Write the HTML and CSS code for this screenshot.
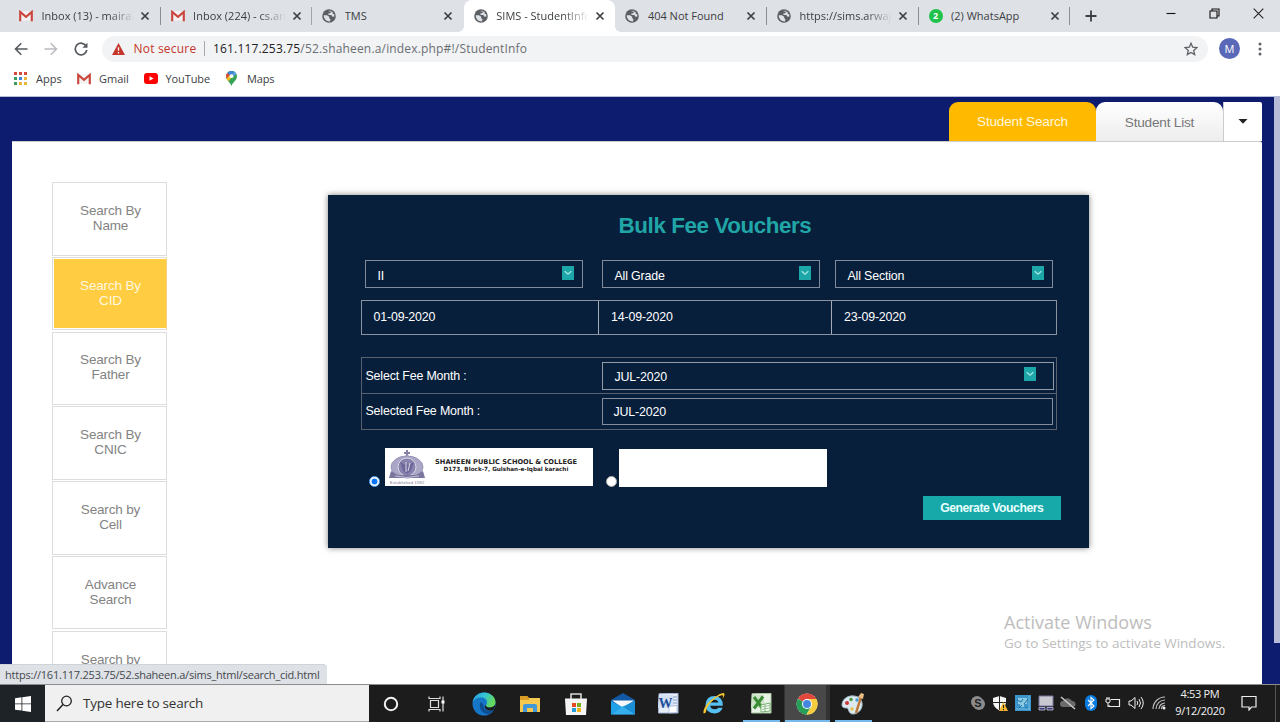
FILE: index.html
```
<!DOCTYPE html>
<html lang="en">
<head>
<meta charset="utf-8">
<title>SIMS - StudentInfo</title>
<link rel="stylesheet" href="styles.css">
</head>
<body>
<svg class="defs" aria-hidden="true">
  <symbol id="gmail" viewBox="0 0 15 12"><path d="M1 1h13v10H1z" fill="#f3f1f1"/><path d="M1.300 11.500V1.600l6.200 5.200 6.200-5.200v9.900" fill="none" stroke="#c9473d" stroke-width="2.300"/></symbol>
  <symbol id="globe" viewBox="0 0 14 14"><circle cx="7" cy="7" r="6.800" fill="#5b5f64"/><path d="M1.700 6.300 5 6.200l2.200 1.500v1.600l1.300.9-.6 2.200C4.500 12.500 1.700 10 1.700 6.300zM6 1.900 9 1.800 9.500 2.800 8 4.200 6.300 4.600 6.500 6 9.300 6 10.500 7.700 12.400 7.400 12.200 5.300 10.500 4.700 11 3.200" fill="#dee1e6"/></symbol>
  <symbol id="close" viewBox="0 0 10 10"><path d="m1.500 1.500 7 7m0-7-7 7" stroke="#3c4043" stroke-width="1.700"/></symbol>
  <symbol id="drop" viewBox="0 0 12 14"><path d="M0 0h12v14H0z" fill="#1ea7a8"/><path d="m2.700 5.200 3.300 3 3.300-3" fill="none" stroke="#a8e5e2" stroke-width="1.300"/></symbol>
</svg>

<header class="browser">
  <div class="tabstrip">
    <div class="tab"><svg class="fav mail"><use href="#gmail"/></svg><span class="tab-title fade">Inbox (13) - maira.</span><svg class="x"><use href="#close"/></svg></div>
    <div class="tab"><svg class="fav mail"><use href="#gmail"/></svg><span class="tab-title fade">Inbox (224) - cs.an</span><svg class="x"><use href="#close"/></svg></div>
    <div class="tab plain"><svg class="fav"><use href="#globe"/></svg><span class="tab-title">TMS</span><svg class="x"><use href="#close"/></svg></div>
    <div class="tab active"><svg class="fav"><use href="#globe"/></svg><span class="tab-title fade">SIMS - StudentInfo</span><svg class="x"><use href="#close"/></svg></div>
    <div class="tab"><svg class="fav"><use href="#globe"/></svg><span class="tab-title">404 Not Found</span><svg class="x"><use href="#close"/></svg></div>
    <div class="tab"><svg class="fav"><use href="#globe"/></svg><span class="tab-title fade">https://sims.arwaj.</span><svg class="x"><use href="#close"/></svg></div>
    <div class="tab"><span class="fav wa">2</span><span class="tab-title">(2) WhatsApp</span><svg class="x"><use href="#close"/></svg></div>
    <svg class="newtab" viewBox="0 0 12 12"><path d="M6 .5v11M.5 6h11" stroke="#3c4043" stroke-width="1.800"/></svg>
    <div class="winctl">
      <svg width="10" height="10" viewBox="0 0 10 10"><path d="M.5 4.500h9" stroke="#111" stroke-width="1.100"/></svg>
      <svg width="11" height="11" viewBox="0 0 11 11"><path d="M1 3h7v7H1zM3 3V1h7v7H8" fill="none" stroke="#111" stroke-width="1.100"/></svg>
      <svg width="11" height="11" viewBox="0 0 11 11"><path d="m.7.700 9.600 9.600m0-9.600L.7 10.300" stroke="#222" stroke-width="1.100"/></svg>
    </div>
  </div>
  <div class="toolbar">
    <svg class="nav" viewBox="0 0 14 14"><path d="M13.500 7H1.500M7.300 1.200 1.500 7l5.800 5.800" fill="none" stroke="#55595e" stroke-width="1.600"/></svg>
    <svg class="nav" viewBox="0 0 14 14"><path d="M.5 7h12M6.700 1.200 12.500 7l-5.800 5.800" fill="none" stroke="#b9bbbe" stroke-width="1.500"/></svg>
    <svg class="nav" viewBox="0 0 14 14"><path d="M12.200 4.300A5.800 5.800 0 1 0 12.800 8" fill="none" stroke="#55595e" stroke-width="1.700"/><path d="M13.500.8v5H8.400z" fill="#55595e"/></svg>
    <div class="omnibox">
      <svg class="warn" viewBox="0 0 14 13"><path d="M7 0l7 13H0z" fill="#c5362b"/><path d="M7 4.500v4M7 9.800v1.500" stroke="#fff" stroke-width="1.400"/></svg>
      <span class="insecure">Not secure</span>
      <span class="url"><b>161.117.253.75</b>/52.shaheen.a/index.php#!/StudentInfo</span>
      <svg class="star" viewBox="0 0 14 14"><path d="m7 1.200 1.700 4 4.300.4-3.300 2.800 1 4.200L7 10.400l-3.700 2.200 1-4.200L1 5.600l4.300-.4z" fill="none" stroke="#5f6368" stroke-width="1.300"/></svg>
    </div>
    <span class="avatar">M</span>
    <svg class="kebab" viewBox="0 0 4 14"><g fill="#5f6368"><circle cx="2" cy="2" r="1.500"/><circle cx="2" cy="7" r="1.500"/><circle cx="2" cy="12" r="1.500"/></g></svg>
  </div>
  <nav class="bookmarks">
    <span class="bm apps"><svg width="13" height="13" viewBox="0 0 13 13"><g fill="#d5493f"><path d="M0 0h3v3H0zM5 0h3v3H5zM10 0h3v3h-3z"/></g><path d="M0 5h3v3H0zM0 10h3v3H0z" fill="#3d9a58"/><path d="M5 5h3v3H5z" fill="#4285d8"/><path d="M10 5h3v3h-3zM5 10h3v3H5zM10 10h3v3h-3z" fill="#e8b53a"/></svg>Apps</span>
    <span class="bm gm"><svg width="14" height="12"><use href="#gmail"/></svg>Gmail</span>
    <span class="bm yt"><svg width="14" height="11" viewBox="0 0 14 11"><rect width="14" height="11" rx="3" fill="#f00"/><path d="m5.500 3.200 4 2.300-4 2.300z" fill="#fff"/></svg>YouTube</span>
    <span class="bm mp"><svg width="11" height="15" viewBox="0 0 11 15"><path d="M5.500 15C4.500 11.500 0 9.500 0 5.300A5.400 5.400 0 0 1 11 5.300C11 9.500 6.500 11.500 5.500 15z" fill="#35a455"/><path d="M5.500 0A5.400 5.400 0 0 0 1.300 1.900L4 4.200 8.300.8A5.400 5.400 0 0 0 5.500 0z" fill="#3f7fe8"/><path d="M1.300 1.900A5.400 5.400 0 0 0 .5 7.500L4 4.200z" fill="#e5483b"/><path d="M.5 7.500Q1 8.800 2.300 10.200L7 5 4 4.200z" fill="#f8bd1c"/><path d="M8.300.8 5.500 4 7.500 5 10.500 3.200A5.400 5.400 0 0 0 8.300.8z" fill="#5b98f0"/><circle cx="5.500" cy="5.200" r="1.900" fill="#fff"/></svg>Maps</span>
  </nav>
</header>

<main class="page">
  <div class="page-tabs">
    <span class="ptab search">Student Search</span>
    <span class="ptab list">Student List</span>
    <span class="ptab more"><svg width="10" height="5" viewBox="0 0 10 5"><path d="M.5 0h9L5 4.800z" fill="#222"/></svg></span>
  </div>
  <section class="content">
    <aside class="side">
      <a class="side-item">Search By<br>Name</a>
      <a class="side-item on">Search By<br>CID</a>
      <a class="side-item">Search By<br>Father</a>
      <a class="side-item">Search By<br>CNIC</a>
      <a class="side-item">Search by<br>Cell</a>
      <a class="side-item">Advance<br>Search</a>
      <a class="side-item last">Search by</a>
    </aside>
    <div class="panel">
      <h1>Bulk Fee Vouchers</h1>
      <div class="selects">
        <div class="select">II<svg><use href="#drop"/></svg></div>
        <div class="select">All Grade<svg><use href="#drop"/></svg></div>
        <div class="select">All Section<svg><use href="#drop"/></svg></div>
      </div>
      <div class="dates"><span>01-09-2020</span><span>14-09-2020</span><span>23-09-2020</span></div>
      <div class="months">
        <div class="mrow"><label>Select Fee Month :</label><div class="field pick">JUL-2020<svg><use href="#drop"/></svg></div></div>
        <div class="mrow second"><label>Selected Fee Month :</label><div class="field">JUL-2020</div></div>
      </div>
      <div class="headers">
        <span class="radio checked"></span>
        <div class="letterhead">
          <svg class="crest" viewBox="0 0 38 36">
            <path d="M19 1v7M16 4h6" stroke="#8580a8" stroke-width="2"/>
            <path d="M10 8l5 1 4-4 4 4 5-1-3 4H13z" fill="#9691b6"/>
            <ellipse cx="19" cy="18" rx="16" ry="11" fill="#aaa6c5" stroke="#9993ba"/>
            <circle cx="19" cy="18" r="9" fill="#8883ae" stroke="#d9d7e5"/>
            <path d="M12 13l6 3 1-3 1 3 6-3-3 9-4 3-4-3z" fill="#6f699b"/>
            <path d="M18 13v10M22 14l-2 8" stroke="#d8d5e5"/>
            <path d="M3 22l-2 7h36l-2-7-7 4H10z" fill="#7b769f"/><path d="M7 27q12 3 24 0" fill="none" stroke="#c5c1d5"/>
            <text x="19" y="34.500" text-anchor="middle" textLength="34">Established 1982</text>
          </svg>
          <div class="school"><strong>SHAHEEN PUBLIC SCHOOL &amp; COLLEGE</strong><small>D173, Block-7, Gulshan-e-Iqbal karachi</small></div>
        </div>
        <span class="radio"></span>
        <div class="letterhead blank"></div>
      </div>
      <button class="generate">Generate Vouchers</button>
    </div>
  </section>
  <div class="scrollbar"></div>
  <div class="activate"><p>Activate Windows</p><small>Go to Settings to activate Windows.</small></div>
  <div class="status">https://161.117.253.75/52.shaheen.a/sims_html/search_cid.html</div>
</main>

<footer class="taskbar">
  <div class="start"><svg width="16" height="16" viewBox="0 0 16 16"><path d="M0 2.200 6.500 1.300v6.200H0zM7.300 1.200 16 0v7.500H7.300zM0 8.300h6.500v6.200L0 13.700zM7.300 8.300H16V16l-8.700-1.200z" fill="#fff"/></svg></div>
  <div class="find"><svg width="17" height="17" viewBox="0 0 17 17"><circle cx="10.500" cy="6" r="4.800" fill="none" stroke="#222" stroke-width="1.300"/><path d="M7 9.500 1 16" stroke="#222" stroke-width="1.500"/></svg>Type here to search</div>
  <div class="apps-row">
    <span><svg width="16" height="16" viewBox="0 0 16 16"><circle cx="8" cy="8" r="6.200" fill="none" stroke="#f2f2f2" stroke-width="2"/></svg></span>
    <span><svg width="18" height="16" viewBox="0 0 18 16"><g fill="none" stroke="#ddd" stroke-width="1.200"><path d="M2.500 4.500h8v7h-8zM1 .5v2h11v-2M1 15.500v-2h11v2M15 .5v15"/></g><path d="M13.500 4.500h3v3h-3z" fill="#fff"/></svg></span>
    <span><svg width="24" height="24" viewBox="0 0 24 24"><defs><linearGradient id="eg" x1="0" y1="0" x2="1" y2=".4"><stop stop-color="#239ddd"/><stop offset=".55" stop-color="#35c6d3"/><stop offset="1" stop-color="#65d957"/></linearGradient></defs><circle cx="12" cy="12" r="11.500" fill="#1576c8"/><path d="M.7 10C1.500 4.500 6.500.5 12 .5c6.500 0 11.500 4.500 11.500 9.500 0 3.500-2.500 5.500-5.500 5.500-2.500 0-4-.8-4-2 0-1 1-1.300 1-3.300C15 7.500 12.500 5.500 9 5.500 5 5.500 2 7.500.7 10z" fill="url(#eg)"/><path d="M9 10c-3.500 4.500.5 12 7 12 2.500-.5 4.500-2 5.500-4-4 2-10.500 0-10-5z" fill="#0d4e91"/><path d="M14 13.500c0 2 5 3.500 8.500 0l1 0-2 4.500c-4 1.500-8.500 0-9-4z" fill="#1c1c1c"/></svg></span>
    <span><svg width="22" height="18" viewBox="0 0 22 18"><path d="M1 1h7l2 2h11v14H1z" fill="#f5c84f"/><path d="M1 1h7l2 2v2H1z" fill="#dc9d27"/><path d="M4 17v-6q0-2 2-2h10q2 0 2 2v6h-4v-4H8v4z" fill="#4198d8"/></svg></span>
    <span><svg width="24" height="24" viewBox="0 0 24 24"><path d="M7 7V2h10v5" fill="none" stroke="#d8d8d8" stroke-width="1.600"/><path d="M1 6.500h22l-1 16.500H2z" fill="#f4f4f4"/><path d="M8 11h4v4H8z" fill="#e34b27"/><path d="M13 11h4v4h-4z" fill="#77ac23"/><path d="M8 16h4v4H8z" fill="#249dd9"/><path d="M13 16h4v4h-4z" fill="#efb31a"/></svg></span>
    <span><svg width="24" height="22" viewBox="0 0 24 22"><path d="M0 7 12 0l12 7v14.500H0z" fill="#1259a5"/><path d="M1 7.500h22L12 15z" fill="#f5f8fb"/><path d="M0 8l11 6L0 21.500zM24 8l-11 6 11 7.500z" fill="#20a1e8"/><path d="M0 21.500 12 13l12 8.500z" fill="#35b0ec"/><path d="M12 13.500 24 8v13.500z" fill="#1a8fd6"/></svg></span>
    <span><svg width="22" height="21" viewBox="0 0 22 21"><path d="M2 .8 21 .3V20H1.500z" fill="#e8eef8" stroke="#a5b8d9"/><path d="M10 4h10M10 7h10M12 10h8M12 13h8M12 16h8" stroke="#7f9cc9"/><path d="M2 2h14v13H1z" fill="#d5e1f3"/><text class="glyph word" x="1.500" y="14.500">W</text><path d="m12 13.500 8-1v7l-8 .5z" fill="#fff" stroke="#9fb3d6" stroke-width=".7"/></svg></span>
    <span><svg width="24" height="23" viewBox="0 0 24 23"><path d="M20.800 13.700H8.200q.6 3.600 4.400 3.600 2.700 0 3.700-1.500h4.300Q18.600 21.500 12.500 21.500 3.800 21 3.500 13 4 4 12.500 4q8.500.5 8.300 9.700zM8.300 10.500h8Q15.800 7.700 12.400 7.700q-3.500 0-4.100 2.800z" fill="#56c0f2"/><path d="M4 20C0 25 .5 16 7 10S22-1 22.500 2c.2 1.500-1 3.500-2 5 1-3 .5-4-1-3.700C13 5 4 14 4 20z" fill="#f5c52d"/></svg></span>
    <span class="open"><svg width="22" height="21" viewBox="0 0 22 21"><path d="M2 .8 21 .3V20H1.500z" fill="#e9f4e7" stroke="#a6c9a0"/><path d="M2 2h12v13H1z" fill="#cce3c7"/><path d="m4 4 9 12M13 3.500 4 15.500" stroke="#3a8d35" stroke-width="3"/><path d="m11 12 9-2v8l-9 1z" fill="#fff" stroke="#74ac6f"/><path d="m12 14 7-1.500m-7 4 7-1.500m-4-3.500v7" stroke="#74ac6f" stroke-width=".8"/></svg></span>
    <span class="open current"><svg width="22" height="22" viewBox="0 0 22 22"><circle cx="11" cy="11" r="10.500" fill="#fff"/><path d="M11 11 1.900 5.700A10.500 10.500 0 0 1 20.100 5.700z" fill="#e1483d"/><path d="M11 11v0L1.900 5.700A10.500 10.500 0 0 0 10.500 21.500l4.500-8z" fill="#279d57"/><path d="M11 6h9.300A10.500 10.500 0 0 1 10.500 21.500l5-8z" fill="#f6cd3e"/><circle cx="11" cy="11" r="5" fill="#fff"/><circle cx="11" cy="11" r="4" fill="#4586df"/></svg></span>
    <span class="open"><svg width="24" height="23" viewBox="0 0 24 23"><path d="M13 4C6 3 1 8 1 13c0 3 3 3 5 3s1 6 6 6c6 0 10-6 9-11-.7-4-3-6.500-8-7z" fill="#dce9ef" stroke="#9eb8c4"/><circle cx="6" cy="11" r="2" fill="#c93636"/><circle cx="10" cy="7.500" r="1.800" fill="#4d9c44"/><circle cx="16" cy="8" r="1.700" fill="#459bd5"/><circle cx="11" cy="17" r="1.700" fill="#e8c049"/><path d="M20 5 15 21" stroke="#bd7437" stroke-width="2.500"/><path d="m17 5 3-4 3 1-1 5z" fill="#e9bd86"/></svg></span>
  </div>
  <div class="tray">
    <span><svg width="16" height="16" viewBox="0 0 16 16"><circle cx="7" cy="7" r="6" fill="#8c8c8c"/><circle cx="9" cy="9" r="6" fill="#8c8c8c"/><text class="glyph skype" x="8" y="12" text-anchor="middle">S</text></svg></span>
    <span><svg width="15" height="15" viewBox="0 0 15 15"><path d="M6.500 0 13 2v5q-1 5-6.500 7.500Q1 12 0 7V2z" fill="#f5f5f5"/><path d="M6.500 0v14M0 6.500h13" stroke="#222"/><path d="m10.500 6 4.500 9H6z" fill="#f4b42c"/><path d="M10.500 9v3m0 1v1.200" stroke="#222"/></svg></span>
    <span><svg width="16" height="16" viewBox="0 0 16 16"><path d="M0 0h16v16H0z" fill="#3b94ca"/><path d="M3 3h9v6H9v3H5V9H3z" fill="#8ccbe2"/><path d="m2 5 4 2 2-3m1 5 4-5m-9 9 3-3m3 3h3" fill="none" stroke="#1b6da8"/><path d="M1 14h14M14 1v14" stroke="#6ebedf"/></svg></span>
    <span><svg width="16" height="16" viewBox="0 0 16 16"><path d="M1 1h14v10H1z" fill="#c8c8d0" stroke="#77769f"/><path d="M1 12.500h6v2.500H1zm8 0h6v2.500H9z" fill="#3e3d78" stroke="#c5c5dd" stroke-width=".8"/></svg></span>
    <span><svg width="16" height="14" viewBox="0 0 16 14"><path d="M3 11a3 3 0 0 1 0-6 5 5 0 0 1 9 0 3 3 0 0 1 1 6z" fill="#6b6b6b"/><path d="m1 1 14 12" stroke="#ccc" stroke-width="1.500"/></svg></span>
    <span><svg width="12" height="16" viewBox="0 0 12 16"><rect width="12" height="16" rx="6" fill="#087ce0"/><path d="m3 5 6 6-3 2.500v-11L9 5l-6 6" fill="none" stroke="#fff" stroke-width="1.100"/></svg></span>
    <span><svg width="16" height="14" viewBox="0 0 16 14"><path d="M6 3.500h8.500v7H4V9" fill="none" stroke="#eee" stroke-width="1.200"/><path d="M1 3h4v3q-2 2-4 0zM2 1v2m2-2v2M3 7v4" fill="none" stroke="#eee"/></svg></span>
    <span><svg width="16" height="14" viewBox="0 0 16 14"><path d="M1 5h2l4-3.500v11L3 9H1zM9 5q1.500 2 0 4m2-6q3 4 0 8m2-10q4.500 6 0 12" fill="none" stroke="#eee"/></svg></span>
    <span><svg width="14" height="14" viewBox="0 0 14 14"><g fill="none" stroke="#bbb" stroke-width="1.200"><path d="M1 13A12 12 0 0 1 13 1M4 13a9 9 0 0 1 9-9M7 13a6 6 0 0 1 6-6M9.500 13a3.500 3.500 0 0 1 3.500-3.500"/></g><circle cx="12" cy="12" r="1.500" fill="#eee"/></svg></span>
  </div>
  <div class="clock">4:53 PM<br>9/12/2020</div>
  <div class="action"><svg width="16" height="16" viewBox="0 0 16 16"><path d="M1 1.500h14v10.500h-4.500L8 15v-3H1z" fill="none" stroke="#eee" stroke-width="1.200"/></svg></div>
</footer>
</body>
</html>
```
FILE: styles.css
```
* { box-sizing: border-box; }
body { margin: 0; width: 1280px; height: 722px; overflow: hidden; display: flex; flex-direction: column; background: #fff; font-family: "Open Sans", "Noto Sans", sans-serif; font-size: 11px; color: #3c4043; }
svg { display: block; flex: none; }
.defs { position: absolute; width: 0; height: 0; }

.browser { height: 97px; flex: none; border-bottom: 1px solid #b7bcd8; }
.tabstrip { height: 32px; padding-left: 9px; display: flex; align-items: center; background: #dee1e6; }
.tab { position: relative; width: 151.600px; height: 32px; padding-left: 10px; display: flex; align-items: center; flex: none; }
.tab::after { content: ""; position: absolute; right: 0; top: 7px; width: 1px; height: 18px; background: #8b8e93; }
.tab.plain::after, .tab.active::after { display: none; }
.tab:nth-child(2)::after { background: #a0a3a8; }
.tab.active { background: #fff; border-radius: 8px 8px 0 0; }
.tab.active::before { content: ""; position: absolute; left: -6px; right: -6px; bottom: 0; height: 6px; background: radial-gradient(circle at 0 0, transparent 6px, #fff 6px) left / 6px 6px no-repeat, radial-gradient(circle at 100% 0, transparent 6px, #fff 6px) right / 6px 6px no-repeat; }
.fav { width: 14px; height: 14px; flex: none; }
.fav.mail { height: 12px; }
.wa { background: #1fc24a; border-radius: 7px; color: #fff; font-weight: 700; font-size: 9px; line-height: 14px; text-align: center; }
.tab-title { width: 93px; margin-left: 8.500px; overflow: hidden; white-space: nowrap; line-height: 18px; }
.fade { -webkit-mask-image: linear-gradient(90deg, #000 72%, transparent 100%); }
.x { width: 10px; height: 10px; margin-left: 5.500px; }
.newtab { width: 12px; height: 12px; margin-left: 15px; }
.winctl { margin-left: auto; padding: 0 16px 5px 0; display: flex; gap: 33px; align-items: center; }

.toolbar { height: 33px; padding-left: 14px; display: flex; align-items: center; }
.nav { width: 14px; height: 14px; margin-right: 16px; }
.nav:nth-child(3) { margin-right: 14px; }
.omnibox { width: 1106px; height: 26px; border-radius: 13px; padding: 0 10px; background: #f1f3f4; display: flex; align-items: center; font-size: 12px; }
.warn { width: 13px; height: 12px; }
.insecure { width: 63px; margin-left: 8.500px; color: #c5362b; white-space: nowrap; letter-spacing: .2px; }
.url { margin-left: 7.500px; padding-left: 8px; border-left: 1px solid #aaa; line-height: 15px; color: #6b6f73; white-space: nowrap; letter-spacing: .17px; }
.url b { font-weight: 400; color: #222; }
.star { width: 14px; height: 14px; margin-left: auto; }
.avatar { width: 21px; height: 21px; margin-left: 11px; border-radius: 50%; background: #5a68b8; color: #fff; font-size: 11px; line-height: 21px; text-align: center; }
.kebab { width: 4px; height: 14px; margin-left: 18px; }
.bookmarks { height: 28px; padding: 0 0 1px 14px; display: flex; align-items: center; }
.bm { display: flex; align-items: center; gap: 9px; }
.apps { width: 63px; }
.gm { width: 67px; gap: 8px; }
.yt { width: 82px; gap: 7.500px; letter-spacing: -.1px; }
.mp { gap: 10px; letter-spacing: -.15px; }

.page { position: relative; height: 587px; flex: none; padding: 5px 18px 0 12px; background: #0d1c6f; overflow: hidden; font-family: "Liberation Sans", Arial, sans-serif; }
.page-tabs { height: 39px; display: flex; justify-content: flex-end; font-size: 13.600px; letter-spacing: -.2px; }
.ptab { display: flex; align-items: center; justify-content: center; }
.ptab.search { width: 147px; border-radius: 9px 9px 0 0; background: #ffba00; color: #fff6dc; }
.ptab.list { width: 127px; padding-top: 1px; border-radius: 9px 9px 0 0; background: linear-gradient(#fff, #ededed); color: #777; }
.ptab.more { width: 39px; padding-right: 1px; border-left: 1px solid #ccc; border-radius: 0 2px 0 0; background: #fff; }
.content { height: 543px; padding: 41px 0 0 40px; display: flex; align-items: flex-start; background: #fff; border-top: 1px solid #ccc; border-radius: 0 2px 0 0; }
.side { width: 115px; display: flex; flex-direction: column; gap: 1.300px; margin-top: -1px; }
.side-item { height: 73.500px; padding: 0 0 2px 2px; display: flex; align-items: center; justify-content: center; text-align: center; border: 1px solid #ddd; font-size: 13.500px; letter-spacing: -.16px; line-height: 15px; color: #838383; }
.side-item.on { background: #ffcc42; color: #fff8df; box-shadow: inset 1px 1px #fff, inset 0 -1px #fff; border-right-color: #f3d382; }
.side-item.last { align-items: flex-start; padding-top: 20px; }
.panel { width: 761px; height: 353px; margin: 12px 0 0 161px; padding: 0 32.500px; background: #081f3c; box-shadow: 0 0 6px rgba(0, 0, 0, .5); color: #fff; font-size: 12.400px; letter-spacing: -.16px; }
.panel h1 { margin: 0; padding: 18px 0 0 13px; height: 65px; font-size: 22.400px; letter-spacing: -.42px; line-height: 26px; text-align: center; color: #20a6a7; }
.selects { height: 28px; display: flex; padding-left: 4px; }
.select { width: 218px; display: flex; align-items: center; justify-content: space-between; padding: 3px 8px 0 12px; border: 1.500px solid #828b9b; margin-right: 19px; }
.select:nth-child(2) { margin-right: 15px; }
.select:nth-child(3) { margin-right: 0; }
.select svg, .field svg { width: 12px; height: 14px; margin-top: -5px; }
.dates { height: 35px; margin-top: 12px; width: 696.500px; display: grid; grid-template-columns: 236.500px 233px 1fr; border: 1px solid #8b93a1; }
.dates span { padding: 0 0 0 12px; line-height: 33px; }
.dates span + span { border-left: 1px solid #a6adb8; }
.months { margin-top: 22px; width: 696.500px; height: 73px; border: 1px solid #59616e; }
.mrow { height: 35px; display: flex; align-items: center; }
.mrow.second { height: 36px; border-top: 1px solid #59616e; }
.mrow label { width: 240px; padding-left: 4px; white-space: nowrap; }
.mrow.second label { padding-bottom: 2px; }
.field { width: 451px; height: 27px; display: flex; align-items: center; border: 1px solid #858d9d; padding: 0 16px 0 11px; }
.pick { justify-content: space-between; height: 28px; width: 452px; border-color: #9299a7; padding: 2px 17px 0 12px; }
.headers { height: 39px; margin-top: 18px; padding-left: 8px; display: flex; align-items: flex-start; }
.radio { width: 11px; height: 11px; margin: 27.500px 5px 0 0; border-radius: 50%; background: #fff; border: 1px solid #aaa; flex: none; }
.radio.checked { border: 1px solid #5aa9f8; background: radial-gradient(circle, #0875ff 0 2.700px, #fff 3.300px); }
.letterhead { width: 208px; height: 38px; margin-right: 13px; display: flex; align-items: flex-start; background: #fff; color: #222; }
.letterhead.blank { margin: 1px 0 0 2px; }
.headers .radio:nth-child(3) { margin-top: 28px; margin-right: 0; margin-left: 0; }
.crest { width: 38px; height: 36px; margin: 1px 0 0 3px; }
.crest text { font: 4px "Liberation Sans", sans-serif; fill: #77728e; }
.school { flex: 1; margin-right: 6px; padding-top: 10px; text-align: center; font-family: "DejaVu Sans", sans-serif; white-space: nowrap; letter-spacing: 0; }
.school strong, .school small { display: block; font-size: 6.650px; line-height: 8px; font-weight: 700; }
.school small { font-size: 5.700px; line-height: 7px; }
.generate { display: block; width: 138.500px; height: 24px; margin: 9px -4.500px 0 auto; padding: 0; border: 0; background: #17a9a9; color: #eaffff; font: 700 12.200px "Liberation Sans", Arial, sans-serif; letter-spacing: -.45px; }
.scrollbar { position: absolute; right: 0; top: 0; width: 6px; height: 546px; background: #b6bcd8; }
.activate { position: absolute; left: 1004px; top: 513px; font-family: "Open Sans", sans-serif; color: #bdbdbd; white-space: nowrap; }
.activate p { margin: 0; font-size: 18px; line-height: 24px; }
.activate small { display: block; font-size: 13.500px; line-height: 18px; }
.status { position: absolute; left: 0; bottom: 0; width: 327px; height: 20px; padding-left: 5px; border-radius: 0 4px 0 0; background: #dee1e6; font: 11px/20px "Open Sans", sans-serif; letter-spacing: -.22px; color: #44484c; white-space: nowrap; border-top: 1px solid #cfd2d7; }

.taskbar { height: 38px; flex: none; display: flex; background: #1c1c1c; border-top: 1px solid #8d8d8d; }
.start { width: 45px; display: flex; align-items: center; justify-content: center; background: #1e2327; }
.find { width: 324px; padding-left: 11px; display: flex; align-items: center; gap: 10px; background: #f0f0f0; font-size: 13.500px; letter-spacing: -.22px; color: #333; white-space: nowrap; border-bottom: 1px solid #aaa; }
.apps-row { display: grid; grid-template-columns: repeat(11, 46.200px); margin-left: -1px; }
.apps-row span { display: flex; align-items: center; justify-content: center; }
.apps-row span:nth-child(3), .apps-row span:nth-child(6) { padding-left: 1px; }
.apps-row .open { position: relative; }
.open::after { content: ""; position: absolute; left: 5px; right: 4px; bottom: 0; height: 2px; background: #76b9ed; }
.open.current { background: linear-gradient(#484848, #484848) 1px 0 / 41px 100% no-repeat, #333; }
.current::after { left: 1px; right: 0; }
.glyph { font-family: "Liberation Serif", serif; font-weight: 700; }
.word { font-size: 14px; fill: #1c4e9b; }
.skype { font: 700 11px "Liberation Sans", sans-serif; fill: #222; }
.tray { width: 203.400px; margin-left: 90.500px; display: grid; grid-template-columns: repeat(9, 22.600px); }
.tray span { display: flex; align-items: center; justify-content: center; padding-bottom: 1px; }
.clock { width: 60px; color: #f2f2f2; font-size: 11px; letter-spacing: -.3px; line-height: 17px; text-align: center; white-space: nowrap; }
.action { width: 46px; padding: 0 0 2px 11px; display: flex; align-items: center; border-right: 1px solid #555; }
```
